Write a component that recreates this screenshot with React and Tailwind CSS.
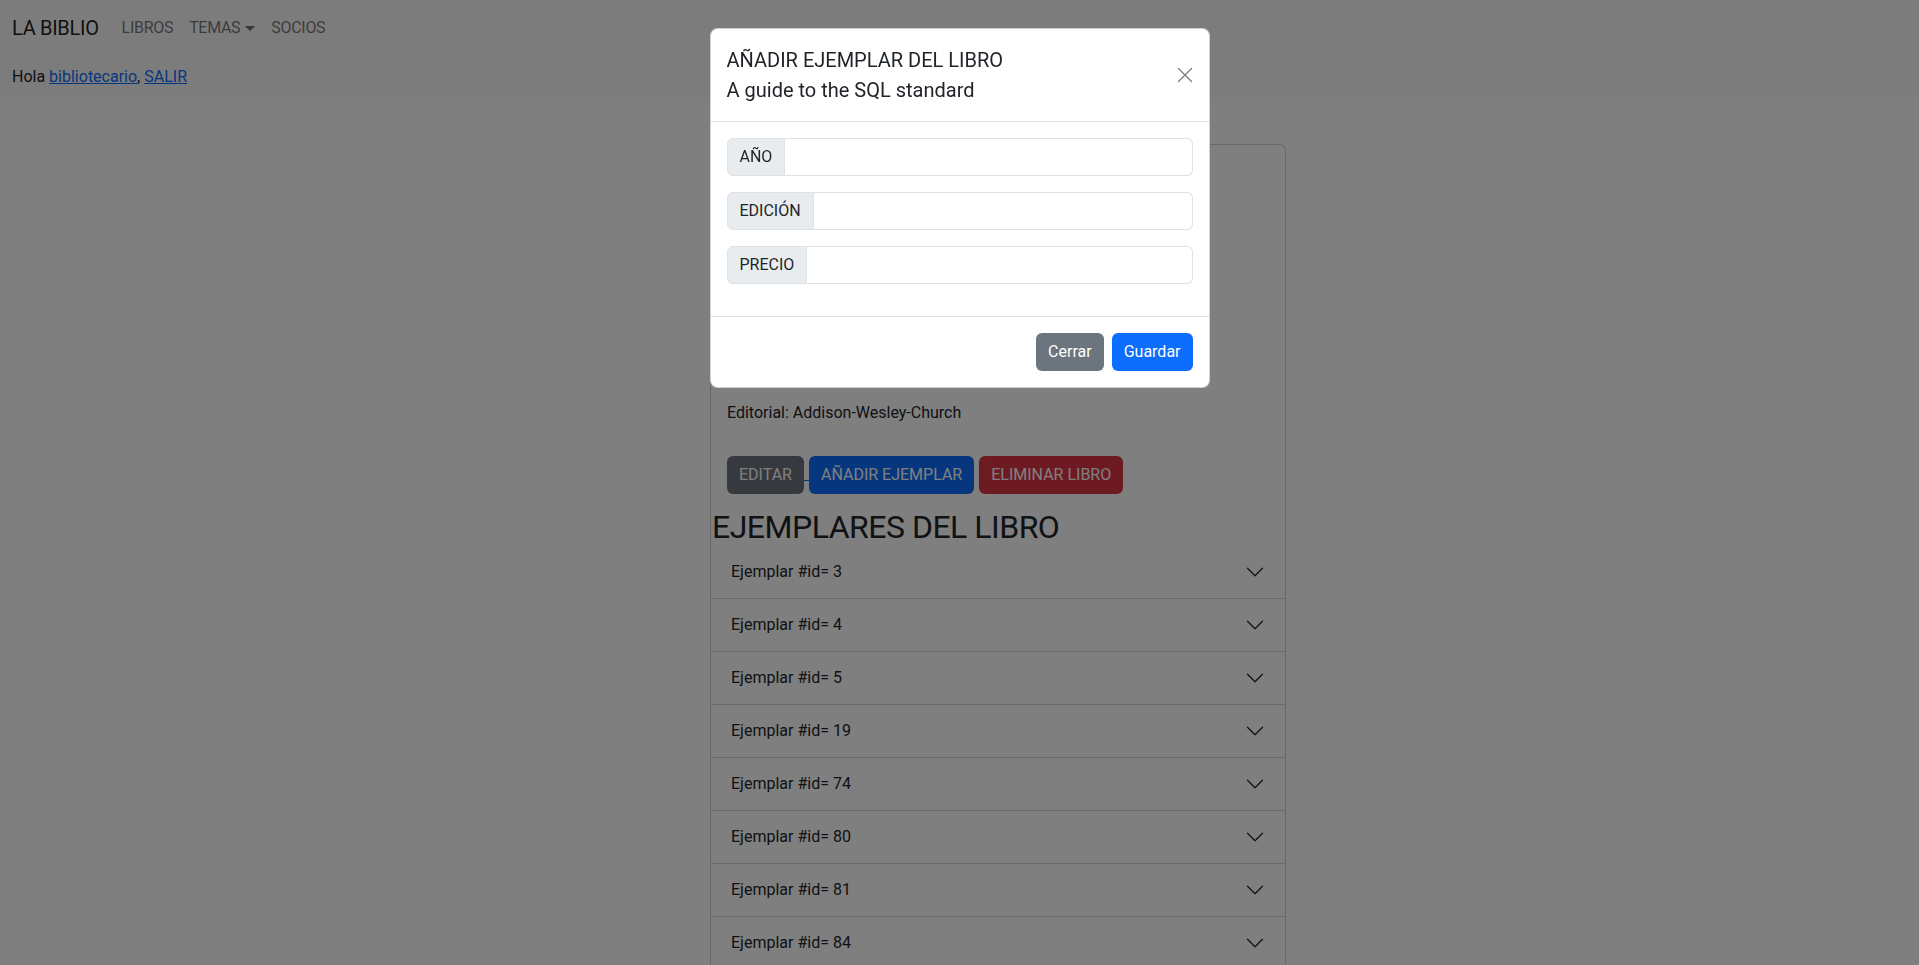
import React from 'react';

const EJEMPLARES = [3, 4, 5, 19, 74, 80, 81, 84];

function Chevron() {
  return (
    <svg width="20" height="20" viewBox="0 0 16 16" fill="none" stroke="#212529" strokeLinecap="round" strokeLinejoin="round">
      <path d="M2 5L8 11L14 5" />
    </svg>
  );
}

function CloseIcon() {
  return (
    <svg width="16" height="16" viewBox="0 0 16 16" fill="none" stroke="#000" strokeWidth="1.4" strokeLinecap="round">
      <path d="M1.5 1.5L14.5 14.5M14.5 1.5L1.5 14.5" />
    </svg>
  );
}

function InputGroup({ label }) {
  return (
    <div className="mb-4 flex h-[38px]">
      <span className="flex items-center rounded-l-[6px] border border-[#dee2e6] bg-[#e9ecef] px-3 leading-6">
        {label}
      </span>
      <input className="min-w-0 flex-1 rounded-r-[6px] border border-l-0 border-[#dee2e6] bg-white px-3 outline-none" />
    </div>
  );
}

export default function App() {
  return (
    <div className="relative h-screen overflow-hidden bg-white font-[Roboto,Arial,sans-serif] text-[16px] leading-6 text-[#212529]">
      {/* Navbar */}
      <nav className="bg-[#f8f9fa] px-3 py-2">
        <div className="flex h-10 items-center">
          <a className="mr-[15px] py-[5px] text-[20px] leading-[30px] tracking-[-0.3px] text-[rgba(0,0,0,0.9)]">LA BIBLIO</a>
          <ul className="flex tracking-[-0.3px] text-[rgba(0,0,0,0.55)]">
            <li className="px-2 py-2">LIBROS</li>
            <li className="flex items-center px-2 py-2">
              TEMAS
              <span className="ml-[5px] h-0 w-0 border-x-[5px] border-t-[5px] border-x-transparent border-t-[rgba(0,0,0,0.55)]" />
            </li>
            <li className="px-2 py-2">SOCIOS</li>
          </ul>
        </div>
        <div className="mt-[17px]">
          Hola <a className="text-[#0d6efd] underline">bibliotecario</a>, <a className="text-[#0d6efd] underline">SALIR</a>
        </div>
      </nav>

      {/* Ficha del libro */}
      <div className="ml-[710px] mt-[47px] w-[576px] rounded-[6px] border border-[rgba(0,0,0,0.175)] bg-white">
        <div className="px-4 pt-4 pb-[14px]">
          {/* resto de datos del libro: tapados por el modal */}
          <div className="h-[240px]" />
          <p>Editorial: Addison-Wesley-Church</p>
          <div className="mt-[31px] flex items-start">
            <button className="h-[38px] rounded-[6px] bg-[#6c757d] px-3 text-white">EDITAR</button>
            <span className="h-[25px] w-[5px] border-b border-[#0d6efd]" />
            <button className="h-[38px] rounded-[6px] bg-[#0d6efd] px-3 text-white">AÑADIR EJEMPLAR</button>
            <button className="ml-[5px] h-[38px] rounded-[6px] bg-[#dc3545] px-3 text-white">ELIMINAR LIBRO</button>
          </div>
        </div>
        <h2 className="pl-px text-[32px] leading-[38px] tracking-[-0.5px]">EJEMPLARES DEL LIBRO</h2>
        <div>
          {EJEMPLARES.map(id => (
            <div key={id} className="flex h-[53px] items-center justify-between border-b border-[rgba(0,0,0,0.175)] px-5">
              <span>Ejemplar #id= {id}</span>
              <Chevron />
            </div>
          ))}
        </div>
      </div>

      {/* Backdrop */}
      <div className="fixed inset-0 bg-black/50" />

      {/* Modal */}
      <div className="fixed inset-0 overflow-hidden">
        <div className="mx-auto mt-7 w-[500px] rounded-lg border border-[rgba(0,0,0,0.175)] bg-white">
          <div className="flex items-center justify-between border-b border-[#dee2e6] p-4">
            <h5 className="text-[20px] leading-[30px]">
              AÑADIR EJEMPLAR DEL LIBRO
              <br />
              A guide to the SQL standard
            </h5>
            <button className="opacity-50">
              <CloseIcon />
            </button>
          </div>
          <div className="p-4">
            <InputGroup label="AÑO" />
            <InputGroup label="EDICIÓN" />
            <InputGroup label="PRECIO" />
          </div>
          <div className="flex justify-end gap-2 border-t border-[#dee2e6] p-4">
            <button className="h-[38px] rounded-[6px] bg-[#6c757d] px-3 text-white">Cerrar</button>
            <button className="h-[38px] rounded-[6px] bg-[#0d6efd] px-3 text-white">Guardar</button>
          </div>
        </div>
      </div>
    </div>
  );
}
